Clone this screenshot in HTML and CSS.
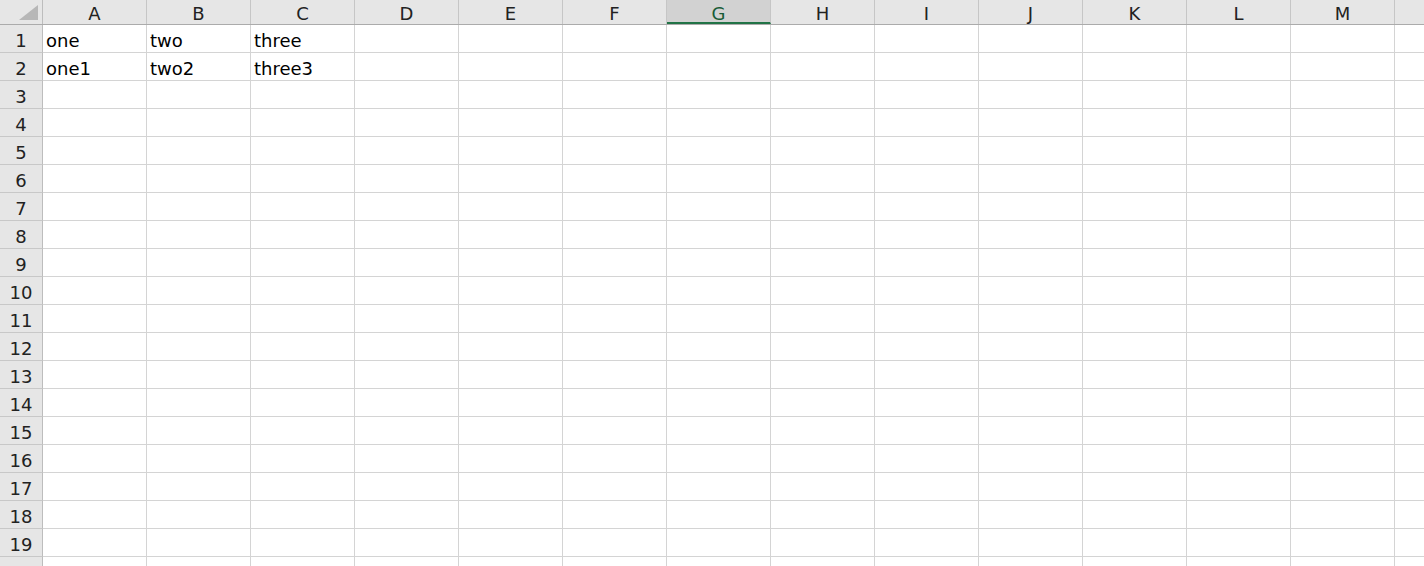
FILE: index.html
```html
<!DOCTYPE html>
<html lang="en">
<head>
    <meta charset="UTF-8">
    <title>Book1</title>
    <link rel="stylesheet" href="styles.css">
</head>
<body>
    <div class="sheet">
        <div class="hdr">
            <div class="corner">
                <svg width="42" height="24" viewBox="0 0 42 24"><polygon points="19,20 38,5 38,20" fill="#b7b7b7"/></svg>
            </div>
            <div class="ch">A</div>
            <div class="ch">B</div>
            <div class="ch">C</div>
            <div class="ch">D</div>
            <div class="ch">E</div>
            <div class="ch">F</div>
            <div class="ch active">G</div>
            <div class="ch">H</div>
            <div class="ch">I</div>
            <div class="ch">J</div>
            <div class="ch">K</div>
            <div class="ch">L</div>
            <div class="ch">M</div>
            <div class="ch"></div>
        </div>
        <div class="row"><div class="rh">1</div><div class="cells"><div class="cell">one</div><div class="cell">two</div><div class="cell">three</div></div></div>
        <div class="row"><div class="rh">2</div><div class="cells"><div class="cell">one1</div><div class="cell">two2</div><div class="cell">three3</div></div></div>
        <div class="row"><div class="rh">3</div><div class="cells"></div></div>
        <div class="row"><div class="rh">4</div><div class="cells"></div></div>
        <div class="row"><div class="rh">5</div><div class="cells"></div></div>
        <div class="row"><div class="rh">6</div><div class="cells"></div></div>
        <div class="row"><div class="rh">7</div><div class="cells"></div></div>
        <div class="row"><div class="rh">8</div><div class="cells"></div></div>
        <div class="row"><div class="rh">9</div><div class="cells"></div></div>
        <div class="row"><div class="rh">10</div><div class="cells"></div></div>
        <div class="row"><div class="rh">11</div><div class="cells"></div></div>
        <div class="row"><div class="rh">12</div><div class="cells"></div></div>
        <div class="row"><div class="rh">13</div><div class="cells"></div></div>
        <div class="row"><div class="rh">14</div><div class="cells"></div></div>
        <div class="row"><div class="rh">15</div><div class="cells"></div></div>
        <div class="row"><div class="rh">16</div><div class="cells"></div></div>
        <div class="row"><div class="rh">17</div><div class="cells"></div></div>
        <div class="row"><div class="rh">18</div><div class="cells"></div></div>
        <div class="row"><div class="rh">19</div><div class="cells"></div></div>
        <div class="row"><div class="rh">20</div><div class="cells"></div></div>
    </div>
</body>
</html>
```

FILE: styles.css
```css
body {
    margin: 0;
    background: #ffffff;
    font-family: 'DejaVu Sans', 'Liberation Sans', sans-serif;
    overflow: hidden;
}
.sheet {
    width: 1499px;
    display: flex;
    flex-direction: column;
}
.hdr {
    display: flex;
    height: 24px;
    background: #e6e6e6;
    border-bottom: 1px solid #ababab;
}
.corner {
    width: 42px;
    height: 24px;
    border-right: 1px solid #bdbdbd;
}
.corner svg {
    display: block;
}
.ch {
    width: 103px;
    border-right: 1px solid #c6c6c6;
    font-size: 18px;
    line-height: 27px;
    text-align: center;
    color: #222;
}
.ch.active {
    background: #d2d2d2;
    color: #185c37;
    height: 22px;
    border-bottom: 2px solid #217346;
    margin-bottom: -1px;
}
.row {
    display: flex;
    height: 28px;
    flex-shrink: 0;
}
.rh {
    width: 42px;
    height: 27px;
    background: #e6e6e6;
    border-right: 1px solid #bdbdbd;
    border-bottom: 1px solid #c8c8c8;
    font-size: 18px;
    line-height: 32px;
    text-align: center;
    color: #222;
}
.cells {
    flex: 1;
    height: 27px;
    display: grid;
    grid-template-columns: repeat(14, 104px);
    border-bottom: 1px solid #d4d4d4;
    background-image: repeating-linear-gradient(to right, transparent 0 103px, #d4d4d4 103px 104px);
}
.cell {
    padding: 0 3px;
    font-size: 18px;
    line-height: 32px;
    color: #000;
    white-space: nowrap;
}
```
